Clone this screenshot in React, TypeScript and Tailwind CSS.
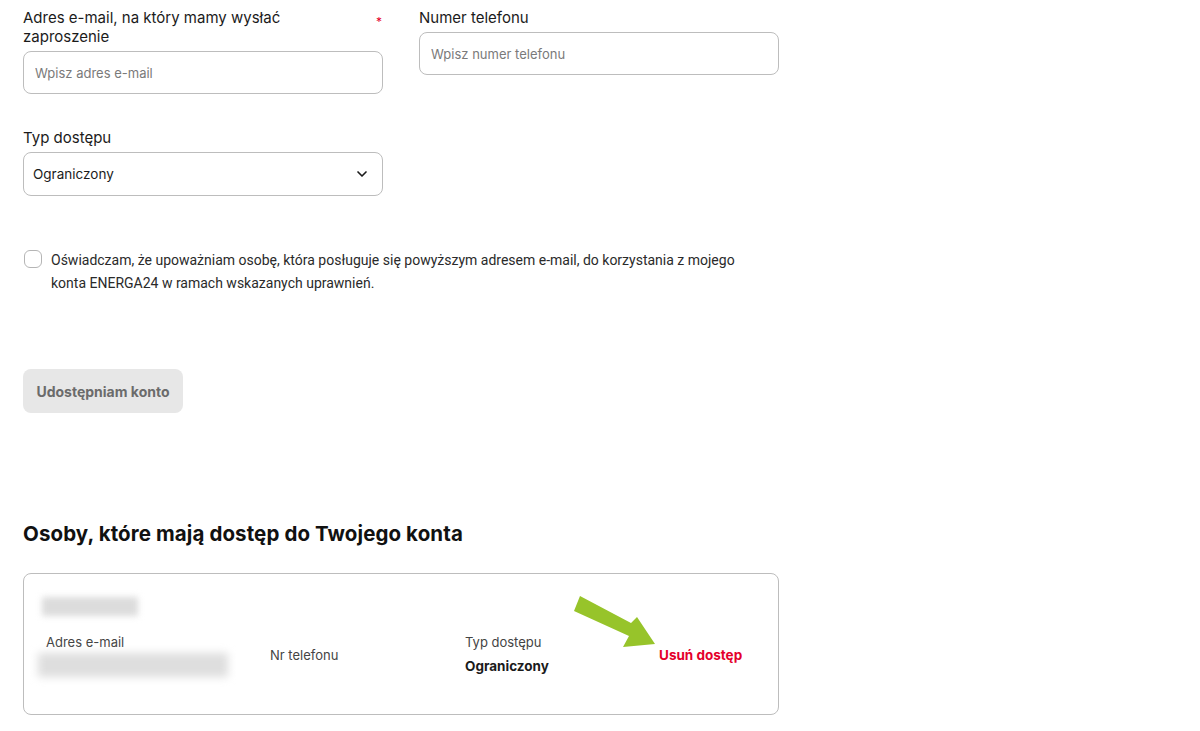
import React from 'react';
import { ChevronDown } from 'lucide-react';

const font = { fontFamily: 'Inter, "Noto Sans", sans-serif' };

const App = () => {
    return (
        <div className="bg-white min-h-screen text-[#1b1b1b] pl-[23px] pt-[8px]" style={font}>
            <div className="w-[756px]">
                {/* form */}
                <div className="grid grid-cols-[360px_360px] gap-x-[36px]">
                    <div>
                        <div className="flex justify-between">
                            <label className="text-[15px] leading-[19px] w-[280px]">Adres e-mail, na który mamy wysłać zaproszenie</label>
                            <span className="text-[#e4002b] text-[12px] leading-[19px] mr-[1px] mt-[4px]">*</span>
                        </div>
                        <input
                            placeholder="Wpisz adres e-mail"
                            className="mt-[5px] w-full h-[43px] rounded-[8px] border border-[#bdbdbd] px-[11px] text-[13px] placeholder:text-[#7a7a7a] outline-none"
                        />
                    </div>
                    <div>
                        <label className="block text-[15px] leading-[19px]">Numer telefonu</label>
                        <input
                            placeholder="Wpisz numer telefonu"
                            className="mt-[5px] w-full h-[43px] rounded-[8px] border border-[#bdbdbd] px-[11px] text-[13px] placeholder:text-[#7a7a7a] outline-none"
                        />
                    </div>
                </div>

                <div className="w-[360px] mt-[34px]">
                    <label className="block text-[15px] leading-[19px]">Typ dostępu</label>
                    <div className="mt-[5px] h-[44px] rounded-[8px] border border-[#bdbdbd] flex items-center justify-between pl-[9px] pr-[12px]">
                        <span className="text-[13.5px]">Ograniczony</span>
                        <ChevronDown size={16} strokeWidth={2.5} />
                    </div>
                </div>

                {/* consent */}
                <div className="flex mt-[53px] w-[730px]">
                    <div className="w-[18px] h-[18px] shrink-0 rounded-[6px] border border-[#b5b5b5] ml-[1px] mt-[1px]" />
                    <p className="ml-[9px] text-[14px] leading-[23px] text-[#2a2a2a]" style={{ fontFamily: 'Roboto, sans-serif' }}>
                        Oświadczam, że upoważniam osobę, która posługuje się powyższym adresem e-mail, do korzystania z mojego konta ENERGA24 w ramach wskazanych uprawnień.
                    </p>
                </div>

                <button className="mt-[74px] w-[160px] h-[44px] rounded-[8px] bg-[#e7e7e7] text-[#6b6b6b] text-[14px] font-bold">
                    Udostępniam konto
                </button>

                {/* list */}
                <h2 className="mt-[107px] text-[20.5px] leading-[28px] font-bold text-[#111] tracking-[0.1px]">Osoby, które mają dostęp do Twojego konta</h2>

                <div className="relative mt-[25px] h-[142px] rounded-[8px] border border-[#bdbdbd] pt-[23px] pl-[18px]">
                    <div className="w-[96px] h-[19px] bg-[#dcdcdc] blur-[3px]" />
                    <div className="flex items-center mt-[18px]">
                        <div className="w-[228px]">
                            <div className="pl-[4px] text-[13px] leading-[16px] text-[#444]">Adres e-mail</div>
                            <div className="-ml-[4px] mt-[3px] w-[190px] h-[24px] bg-[#dedede] blur-[4px]" />
                        </div>
                        <div className="w-[195px] text-[13px] text-[#444]">Nr telefonu</div>
                        <div className="w-[194px]">
                            <div className="text-[13px] leading-[16px] text-[#444]">Typ dostępu</div>
                            <div className="mt-[6px] text-[13.5px] font-bold">Ograniczony</div>
                        </div>
                        <button className="text-[13.5px] font-bold text-[#e4002b]">Usuń dostęp</button>
                    </div>

                    <svg className="absolute left-[548px] top-[18px]" width="90" height="60" viewBox="0 0 90 60">
                        <polygon
                            points="8,4 59,31 65,25 83,52 51,55 57,44 2,19"
                            fill="#97c42a"
                        />
                    </svg>
                </div>
            </div>
        </div>
    );
};

export default App;
